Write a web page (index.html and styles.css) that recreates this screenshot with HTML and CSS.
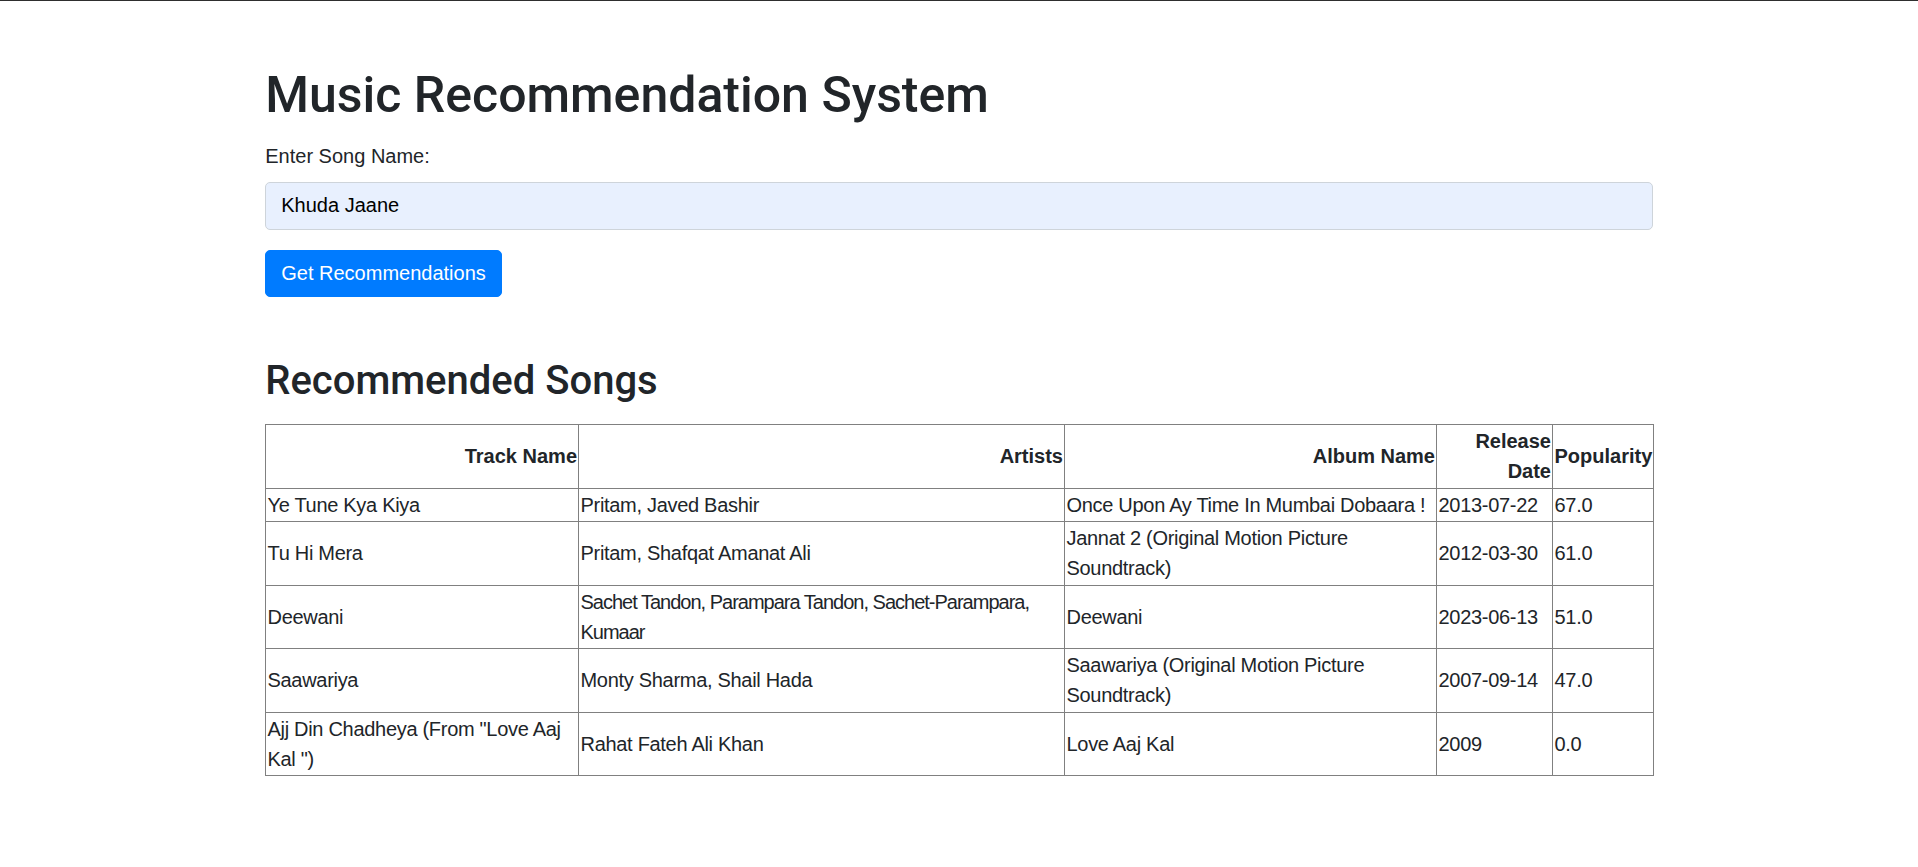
FILE: index.html
```html
<!DOCTYPE html>
<html lang="en">
<head>
<meta charset="utf-8">
<title>Music Recommendation System</title>
<link rel="stylesheet" href="styles.css">
</head>
<body>
<div class="container">
  <h1 class="title">Music Recommendation System</h1>
  <form class="search-form">
    <div class="form-group">
      <label class="form-label" for="song">Enter Song Name:</label>
      <input class="form-control" id="song" type="text" value="Khuda Jaane">
    </div>
    <button class="btn-primary" type="button">Get Recommendations</button>
  </form>
  <div class="results">
    <h2 class="subtitle">Recommended Songs</h2>
    <table class="dataframe">
      <colgroup>
        <col class="c-track">
        <col class="c-artists">
        <col class="c-album">
        <col class="c-date">
        <col class="c-pop">
      </colgroup>
      <thead>
        <tr class="head-row">
          <th>Track Name</th>
          <th>Artists</th>
          <th>Album Name</th>
          <th>Release Date</th>
          <th>Popularity</th>
        </tr>
      </thead>
      <tbody>
        <tr>
          <td>Ye Tune Kya Kiya</td>
          <td>Pritam, Javed Bashir</td>
          <td>Once Upon Ay Time In Mumbai Dobaara !</td>
          <td>2013-07-22</td>
          <td>67.0</td>
        </tr>
        <tr>
          <td>Tu Hi Mera</td>
          <td>Pritam, Shafqat Amanat Ali</td>
          <td>Jannat 2 (Original Motion Picture Soundtrack)</td>
          <td>2012-03-30</td>
          <td>61.0</td>
        </tr>
        <tr>
          <td>Deewani</td>
          <td class="cell-tight">Sachet Tandon, Parampara Tandon, Sachet-Parampara, Kumaar</td>
          <td>Deewani</td>
          <td>2023-06-13</td>
          <td>51.0</td>
        </tr>
        <tr>
          <td>Saawariya</td>
          <td>Monty Sharma, Shail Hada</td>
          <td>Saawariya (Original Motion Picture Soundtrack)</td>
          <td>2007-09-14</td>
          <td>47.0</td>
        </tr>
        <tr>
          <td>Ajj Din Chadheya (From "Love Aaj Kal ")</td>
          <td>Rahat Fateh Ali Khan</td>
          <td>Love Aaj Kal</td>
          <td>2009</td>
          <td>0.0</td>
        </tr>
      </tbody>
    </table>
  </div>
</div>
</body>
</html>
```
FILE: styles.css
```css
* { box-sizing: border-box; }

html, body {
  margin: 0;
  padding: 0;
  background: #fff;
}

body {
  border-top: 1px solid #2e2e2e;
  font-family: "Liberation Sans", Arial, sans-serif;
  font-size: 20px;
  line-height: 1.5;
  color: #212529;
}

.container {
  width: 1425px;
  margin: 0 auto;
  padding: 64px 18.75px 40px;
}

.title {
  margin: 0 0 16px;
  font-family: Roboto, "Liberation Sans", sans-serif;
  font-size: 50px;
  font-weight: 500;
  line-height: 1.2;
}

.search-form {
  margin: 0;
}

.form-group {
  margin-bottom: 20px;
}

.form-label {
  display: inline-block;
  margin-bottom: 11px;
}

.form-control {
  display: block;
  width: 100%;
  height: 47.5px;
  padding: 7.5px 15px;
  font-family: inherit;
  font-size: 20px;
  line-height: 1.5;
  color: #000;
  background: #e8f0fe;
  border: 1px solid #ced4da;
  border-radius: 5px;
  outline: none;
}

.btn-primary {
  display: inline-block;
  height: 47.5px;
  padding: 7.5px 15px;
  font-family: inherit;
  font-size: 20px;
  line-height: 1.5;
  color: #fff;
  background: #007bff;
  border: 1px solid #007bff;
  border-radius: 5px;
  cursor: pointer;
}

.results {
  margin-top: 60px;
}

.subtitle {
  margin: 0 0 19px;
  font-family: Roboto, "Liberation Sans", sans-serif;
  font-size: 40px;
  font-weight: 500;
  line-height: 1.2;
}

.dataframe {
  width: 100%;
  table-layout: fixed;
  border-collapse: collapse;
  border: 1px solid #808080;
}

.c-track { width: 313px; }
.c-artists { width: 486px; }
.c-album { width: 372px; }
.c-date { width: 116px; }
.c-pop { width: 101px; }

.dataframe th,
.dataframe td {
  border: 1px solid #808080;
  padding: 1.25px;
  vertical-align: middle;
  line-height: 30px;
}

.dataframe td {
  letter-spacing: -0.3px;
}

.dataframe td.cell-tight {
  letter-spacing: -1px;
}

.head-row {
  text-align: right;
}

.dataframe th {
  font-weight: 700;
  text-align: inherit;
}
```
